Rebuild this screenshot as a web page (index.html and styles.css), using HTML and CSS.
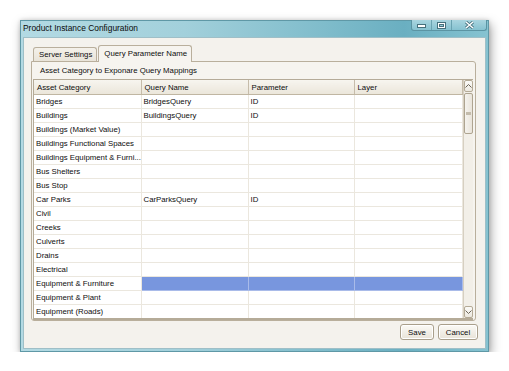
FILE: index.html
```html
<!DOCTYPE html>
<html lang="en">
<head>
    <meta charset="UTF-8">
    <title>Product Instance Configuration</title>
    <link rel="stylesheet" href="styles.css">
</head>
<body>
    <div class="window">
        <div class="titlebar">
            <span class="title">Product Instance Configuration</span>
            <div class="caption-buttons">
                <span class="cap-btn cap-min">
                    <svg width="9" height="6" viewBox="0 0 9 6"><rect x="0.5" y="2.5" width="8" height="3" fill="#fff" stroke="#46707c" stroke-width="1"/></svg>
                </span>
                <span class="cap-btn cap-max">
                    <svg width="9" height="7" viewBox="0 0 9 7"><rect x="0.5" y="0.5" width="8" height="6" fill="none" stroke="#46707c" stroke-width="1"/><rect x="1.5" y="1.5" width="6" height="4" fill="none" stroke="#fff" stroke-width="1"/><rect x="2.5" y="2.5" width="4" height="2" fill="none" stroke="#46707c" stroke-width="1"/></svg>
                </span>
                <span class="cap-btn cap-close">
                    <svg width="9" height="8" viewBox="0 0 9 8"><path d="M1 1 L8 7 M8 1 L1 7" stroke="#46707c" stroke-width="3"/><path d="M1 1 L8 7 M8 1 L1 7" stroke="#fff" stroke-width="1.5"/></svg>
                </span>
            </div>
        </div>

        <div class="client">
            <div class="tabs">
                <div class="tab">Server Settings</div>
                <div class="tab active">Query Parameter Name</div>
            </div>

            <div class="panel">
                <div class="panel-title">Asset Category to Exponare Query Mappings</div>
                <div class="grid-wrap">
                    <table class="grid">
                        <colgroup>
                            <col class="c1"><col class="c2"><col class="c3"><col class="c4">
                        </colgroup>
                        <thead>
                            <tr><th>Asset Category</th><th>Query Name</th><th>Parameter</th><th>Layer</th></tr>
                        </thead>
                        <tbody>
                            <tr><td>Bridges</td><td>BridgesQuery</td><td>ID</td><td></td></tr>
                            <tr><td>Buildings</td><td>BuildingsQuery</td><td>ID</td><td></td></tr>
                            <tr><td>Buildings (Market Value)</td><td></td><td></td><td></td></tr>
                            <tr><td>Buildings Functional Spaces</td><td></td><td></td><td></td></tr>
                            <tr><td>Buildings Equipment &amp; Furni...</td><td></td><td></td><td></td></tr>
                            <tr><td>Bus Shelters</td><td></td><td></td><td></td></tr>
                            <tr><td>Bus Stop</td><td></td><td></td><td></td></tr>
                            <tr><td>Car Parks</td><td>CarParksQuery</td><td>ID</td><td></td></tr>
                            <tr><td>Civil</td><td></td><td></td><td></td></tr>
                            <tr><td>Creeks</td><td></td><td></td><td></td></tr>
                            <tr><td>Culverts</td><td></td><td></td><td></td></tr>
                            <tr><td>Drains</td><td></td><td></td><td></td></tr>
                            <tr><td>Electrical</td><td></td><td></td><td></td></tr>
                            <tr class="selected"><td>Equipment &amp; Furniture</td><td></td><td></td><td></td></tr>
                            <tr><td>Equipment &amp; Plant</td><td></td><td></td><td></td></tr>
                            <tr><td>Equipment (Roads)</td><td></td><td></td><td></td></tr>
                        </tbody>
                    </table>
                    <div class="scrollbar">
                        <div class="sb-btn">
                            <svg width="7" height="4" viewBox="0 0 7 4"><path d="M0.5 3.5 L3.5 0.5 L6.5 3.5" fill="none" stroke="#6b6558" stroke-width="1"/></svg>
                        </div>
                        <div class="sb-track">
                            <div class="sb-thumb"><span class="sb-grip"></span></div>
                        </div>
                        <div class="sb-btn">
                            <svg width="7" height="4" viewBox="0 0 7 4"><path d="M0.5 0.5 L3.5 3.5 L6.5 0.5" fill="none" stroke="#6b6558" stroke-width="1"/></svg>
                        </div>
                    </div>
                </div>
            </div>

            <div class="actions">
                <button class="btn btn-save">Save</button>
                <button class="btn btn-cancel">Cancel</button>
            </div>
        </div>
    </div>
</body>
</html>
```

FILE: styles.css
```css
html, body {
    margin: 0;
    padding: 0;
    background: #fff;
}
body {
    padding: 20px 0 0 20px;
    font-family: "Liberation Sans", Arial, sans-serif;
    color: #0d0d0d;
}
.window {
    width: 469px;
    height: 332px;
    box-sizing: border-box;
    border: 1px solid #5f98a6;
    background: linear-gradient(90deg, #b3dae3 0%, #a2d0db 35%, #7fbccb 65%, #6aafc1 82%, #86c3d1 100%);
    box-shadow: 2px 4px 10px rgba(0,0,0,0.35), 0 0 4px rgba(0,0,0,0.15);
    display: flex;
    flex-direction: column;
}
.titlebar {
    height: 16px;
    display: flex;
    align-items: flex-start;
    justify-content: space-between;
}
.title {
    font-size: 8.4px;
    line-height: 15px;
    padding-left: 2px;
    color: #0a0a0a;
}
.caption-buttons {
    display: flex;
    margin-right: 1px;
    margin-top: -1px;
    height: 10px;
    border: 1px solid #5b94a3;
    border-top: none;
    border-radius: 0 0 3px 3px;
    background: linear-gradient(180deg, #a9d5df, #86c2d0);
    overflow: hidden;
}
.cap-btn {
    display: flex;
    align-items: center;
    justify-content: center;
    height: 10px;
    width: 19px;
    border-left: 1px solid #6aa3b1;
}
.cap-btn:first-child {
    border-left: none;
}
.cap-close {
    width: 34px;
}
.client {
    flex: 1;
    margin: 0 2px 2px;
    background: #f4f2ed;
    border: 1px solid #9fbfc7;
    display: flex;
    flex-direction: column;
}
.tabs {
    display: flex;
    align-items: flex-end;
    padding: 7px 0 0 9px;
    height: 16px;
}
.tab {
    font-size: 7.8px;
    line-height: 13px;
    height: 13px;
    padding: 0 4px 0 5px;
    background: linear-gradient(180deg, #f4f1ea, #e9e4d9);
    border: 1px solid #b9af9c;
    border-bottom: none;
    border-radius: 3px 3px 0 0;
    margin-right: 1px;
}
.tab.active {
    height: 16px;
    line-height: 16px;
    background: #f6f4ef;
    margin-bottom: -1px;
    position: relative;
    z-index: 1;
}
.panel {
    margin: 0 9px 0 7px;
    height: 260px;
    box-sizing: border-box;
    border: 1px solid #b9af9c;
    border-radius: 0 3px 3px 3px;
    background: #f6f4ef;
    display: flex;
    flex-direction: column;
}
.panel-title {
    font-size: 7.8px;
    line-height: 17px;
    height: 17px;
    padding-left: 8px;
}
.grid-wrap {
    display: flex;
    margin: 0 2px 0 1px;
    border: 1px solid #b5ab98;
    border-bottom-width: 2px;
    background: #fff;
}
.grid {
    border-collapse: collapse;
    table-layout: fixed;
    width: 428px;
    font-size: 7.8px;
}
.c1 { width: 107px; }
.c2 { width: 107px; }
.c3 { width: 106px; }
.c4 { width: 108px; }
.grid th {
    height: 14px;
    padding: 0 3px;
    text-align: left;
    font-weight: normal;
    background: linear-gradient(180deg, #f7f5ef, #ebe6da);
    border-right: 1px solid #c6bcaa;
    border-bottom: 1px solid #c0b6a2;
    white-space: nowrap;
    overflow: hidden;
}
.grid td {
    height: 13px;
    padding: 0 2px;
    line-height: 13px;
    border-right: 1px solid #ebe7de;
    border-bottom: 1px solid #ebe7de;
    white-space: nowrap;
    overflow: hidden;
}
.grid tbody tr:last-child td {
    border-bottom: none;
}
.grid tr.selected td + td {
    background: #7896de;
    border-right-color: #a9bbe9;
    border-bottom-color: #a9bbe9;
}
.scrollbar {
    width: 13px;
    display: flex;
    flex-direction: column;
    background: #f2efe8;
    border-left: 1px solid #d6cfc1;
}
.sb-btn {
    height: 12px;
    margin: 0 0 1px;
    box-sizing: border-box;
    border: 1px solid #b4aa96;
    border-radius: 2px;
    background: linear-gradient(180deg, #fbfaf7, #ece8df);
    display: flex;
    align-items: center;
    justify-content: center;
}
.sb-btn:last-child {
    margin: 1px 0 0;
}
.sb-track {
    flex: 1;
}
.sb-thumb {
    height: 41px;
    box-sizing: border-box;
    border: 1px solid #aea490;
    border-radius: 2px;
    background: linear-gradient(90deg, #f5f3ee, #e9e4da);
    display: flex;
    align-items: center;
    justify-content: center;
}
.sb-grip {
    width: 5px;
    height: 3px;
    background: #c4bcac;
}
.actions {
    display: flex;
    justify-content: flex-end;
    gap: 4px;
    padding: 3px 7px 0 0;
}
.btn {
    height: 16px;
    padding: 0;
    font-family: "Liberation Sans", Arial, sans-serif;
    font-size: 7.8px;
    color: #0d0d0d;
    border: 1px solid #a99f8b;
    border-radius: 3px;
    background: linear-gradient(180deg, #fbfaf6, #e8e3d8);
    box-shadow: inset 0 0 0 1px #fff;
}
.btn-save { width: 34px; }
.btn-cancel { width: 40px; }
```
